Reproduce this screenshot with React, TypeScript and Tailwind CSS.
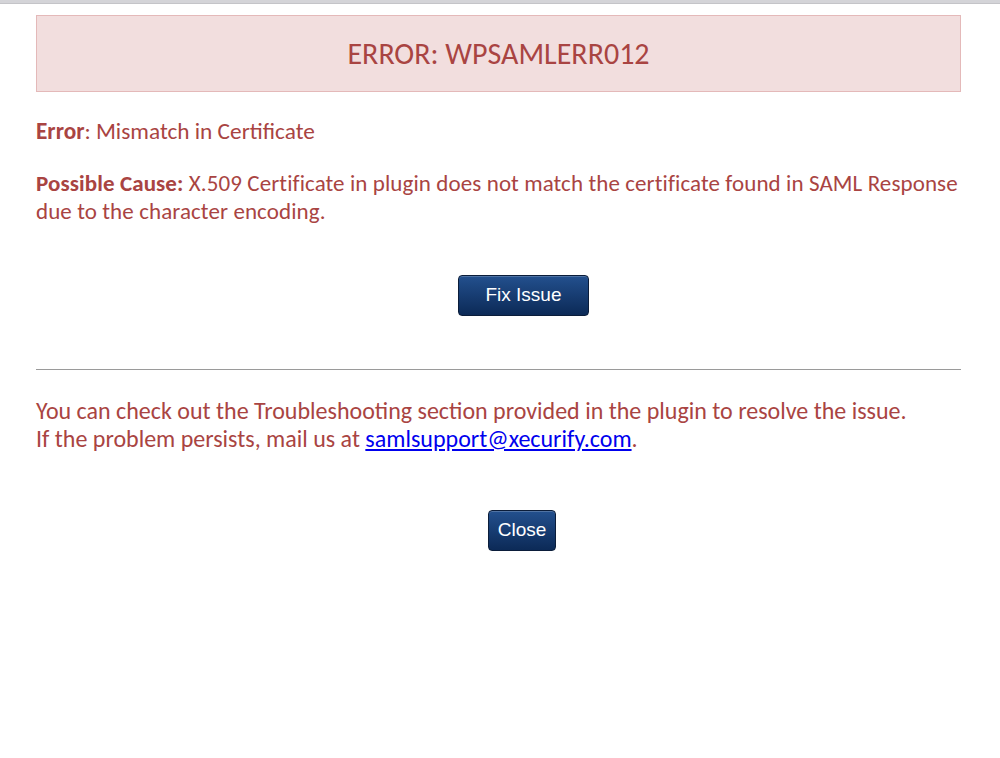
import React from "react";

const textFont = { fontFamily: "Carlito, Lato, 'Open Sans', sans-serif" };

const NavyButton: React.FC<{ label: string; width: string }> = ({ label, width }) => (
  <button
    className={`${width} h-[41px] rounded-[4px] border border-[#0b1d3a] bg-gradient-to-b from-[#23508e] to-[#0c2a57] text-white text-[19px] shadow-[inset_0_1px_0_rgba(255,255,255,0.2)]`}
    style={{ fontFamily: "'Liberation Sans', Arial, sans-serif" }}
  >
    {label}
  </button>
);

export default function App() {
  return (
    <div className="w-[1000px] h-[758px] bg-white overflow-hidden" style={textFont}>
      <div className="h-[4px] bg-[#d4d4d8] border-b border-[#c4c4c8]" />
      <div className="pl-[36px] pr-[39px] pt-[11px] text-[#a94442]">
        {/* header alert */}
        <div className="h-[77px] bg-[#f2dede] border border-[#e4b9b9] flex items-center justify-center">
          <span className="text-[30px]">ERROR: WPSAMLERR012</span>
        </div>

        <p className="mt-[25px] text-[23.3px] leading-[28px]">
          <strong className="font-semibold">Error</strong>: Mismatch in Certificate
        </p>
        <p className="mt-[24px] text-[23px] leading-[28px] tracking-[0.1px]">
          <strong className="font-semibold">Possible Cause:</strong> X.509 Certificate in plugin does not match the
          certificate found in SAML Response due to the character encoding.
        </p>

        <div className="mt-[50px] flex justify-center pl-[50px]">
          <NavyButton label="Fix Issue" width="w-[131px]" />
        </div>

        <hr className="mt-[53px] border-t border-[#9a9a9a]" />

        <p className="mt-[27px] text-[24px] leading-[28px]">
          You can check out the Troubleshooting section provided in the plugin to resolve the issue.
          <br />
          If the problem persists, mail us at{" "}
          <a href="#" className="text-[#0000ee] underline">
            samlsupport@xecurify.com
          </a>
          .
        </p>

        <div className="mt-[57px] flex justify-center pl-[47px]">
          <NavyButton label="Close" width="w-[68px]" />
        </div>
      </div>
    </div>
  );
}
